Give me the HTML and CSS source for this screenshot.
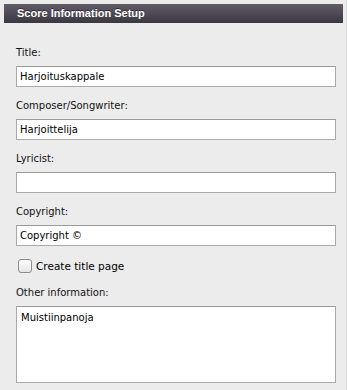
FILE: index.html
```html
<!DOCTYPE html>
<html lang="fi">
<head>
  <meta charset="UTF-8">
  <title>Score Information Setup</title>
  <link rel="stylesheet" href="styles.css">
</head>
<body>
  <div class="panel">
    <div class="panel-header">Score Information Setup</div>
    <form class="score-form" autocomplete="off">
      <div class="field">
        <label for="title">Title:</label>
        <input id="title" type="text" value="Harjoituskappale">
      </div>
      <div class="field">
        <label for="composer">Composer/Songwriter:</label>
        <input id="composer" type="text" value="Harjoittelija">
      </div>
      <div class="field">
        <label for="lyricist">Lyricist:</label>
        <input id="lyricist" type="text" value="">
      </div>
      <div class="field">
        <label for="copyright">Copyright:</label>
        <input id="copyright" type="text" value="Copyright ©">
      </div>
      <label class="check-row">
        <input type="checkbox" id="titlePage">
        <span class="check-box"></span>
        <span>Create title page</span>
      </label>
      <div class="field">
        <label for="other">Other information:</label>
        <textarea id="other">Muistiinpanoja</textarea>
      </div>
    </form>
  </div>
</body>
</html>
```

FILE: styles.css
```css
* {
  box-sizing: border-box;
}

body {
  margin: 0;
  padding: 0;
  background-color: #ececec;
  font-family: 'DejaVu Sans', sans-serif;
  font-size: 10px;
  color: #000;
}

.panel {
  width: 347px;
  height: 390px;
  padding: 4px 3px 0 4px;
  border-right: 1px solid #d8d8d8;
}

.panel-header {
  height: 19px;
  padding-left: 13px;
  line-height: 19px;
  font-family: 'Liberation Sans', sans-serif;
  font-size: 11px;
  font-weight: bold;
  color: #fff;
  text-shadow: 0 -1px 0 rgba(0, 0, 0, 0.45);
  background: linear-gradient(to bottom, #625c69, #3b3740);
}

.score-form {
  padding: 22px 7px 0 12px;
  display: flex;
  flex-direction: column;
  gap: 11px;
}

.field {
  display: flex;
  flex-direction: column;
  gap: 5px;
}

.field label {
  height: 16px;
  line-height: 16px;
  color: #111;
}

.field input,
.field textarea {
  width: 320px;
  height: 21px;
  margin: 0;
  padding: 0 3px;
  border: 1px solid #a9a9a9;
  border-top-color: #9a9a9a;
  background: #fff;
  font-family: 'DejaVu Sans', sans-serif;
  font-size: 10px;
  color: #000;
  outline: none;
}

.field textarea {
  height: 77px;
  padding: 5px 4px;
  resize: none;
}

.check-row {
  display: flex;
  align-items: center;
  gap: 4px;
  height: 20px;
  margin-top: -1px;
  margin-bottom: -2px;
  padding-left: 2px;
  font-size: 10.5px;
}

.check-row input {
  display: none;
}

.check-box {
  width: 14px;
  height: 14px;
  border: 1px solid #8c8c8c;
  border-radius: 3px;
  background: linear-gradient(to bottom, #fdfdfd, #e6e6e6);
}
```
